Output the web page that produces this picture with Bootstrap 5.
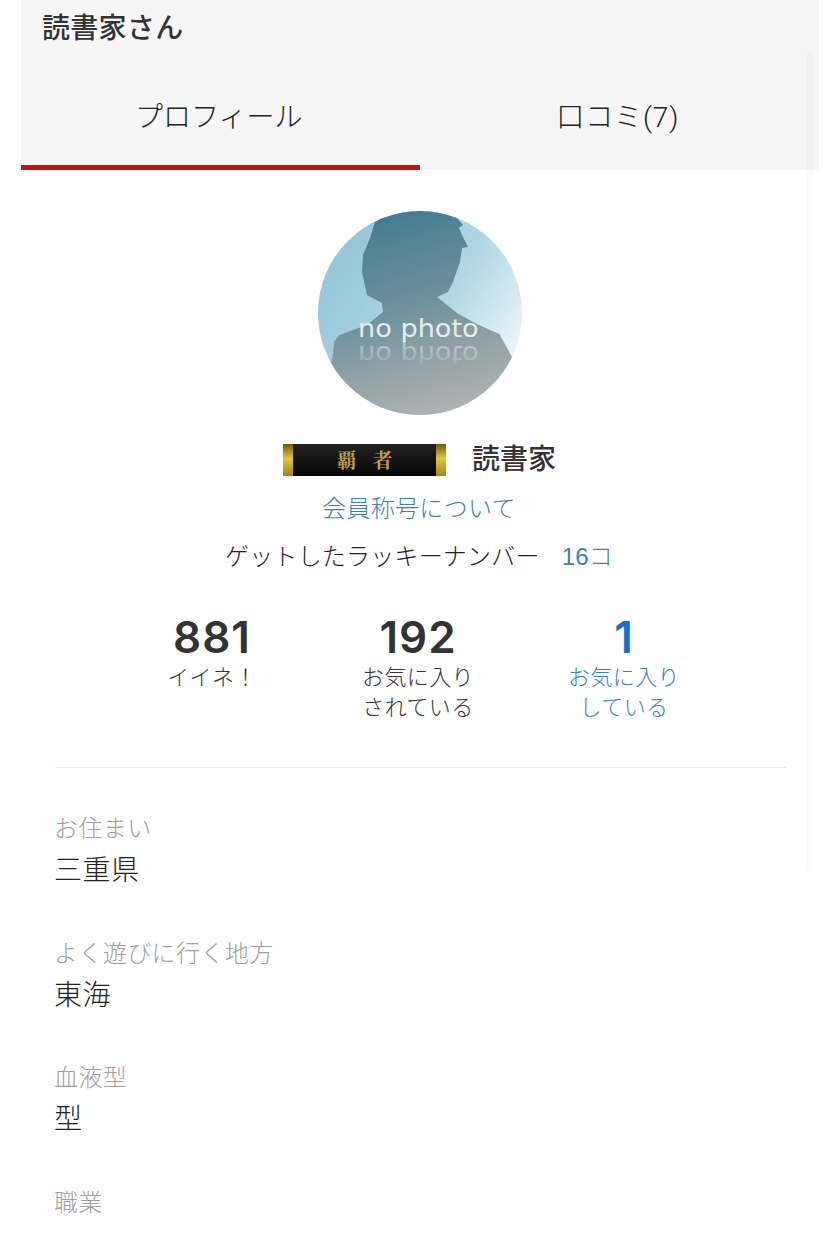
<!DOCTYPE html>
<html lang="ja">
<head>
<meta charset="utf-8">
<title>読書家さん</title>
<link href="https://cdn.jsdelivr.net/npm/bootstrap@5.3.0/dist/css/bootstrap.min.css" rel="stylesheet">
<style>
html,body{height:100%;overflow:hidden;background:#fff}
body{font-family:"Liberation Sans","Noto Sans CJK JP",sans-serif;color:#333}
.shell{width:798px;margin-left:21px;position:relative;height:1243px;overflow:hidden}
.headband{background:#f6f6f6;height:170px}
.ptitle{font-size:28px;line-height:40px;padding:6px 0 0 21px;height:62px;font-weight:500;color:#333;margin:0;letter-spacing:.3px;font-family:"Noto Sans CJK JP",sans-serif}
.tabbar{height:108px}
.tabitem{flex:0 0 398.5px;height:108px;font-family:Roboto,"Noto Sans CJK JP",sans-serif;font-size:28px;font-weight:300;line-height:112px;text-align:center;color:#222;text-decoration:none;border-bottom:5px solid transparent}
.tabitem.on{border-bottom-color:#c7120f;padding-right:3px}
.tabitem.off{padding-right:2px;letter-spacing:.9px}
.tabitem:hover{color:#222}
.avatar{width:204px;height:204px;display:block;margin:41px auto 0}
.rankrow{height:44px;margin-top:21px;padding-right:1px}
.medal{width:163px;height:32px;margin-top:3px;background:linear-gradient(#6e5a12,#e6c738 45%,#a3831a) left/10px 100% no-repeat,linear-gradient(#6e5a12,#e6c738 45%,#a3831a) right/10px 100% no-repeat,linear-gradient(#232323,#050505);color:#c09f3c;font-family:"Noto Serif CJK JP","Noto Sans CJK JP",serif;font-weight:700;font-size:20px;letter-spacing:16px;line-height:32px;text-align:center;text-indent:16px}
.rankname{font-size:28px;font-weight:500;color:#333;margin-left:26px;line-height:40px;margin-top:-3px;font-family:"Noto Sans CJK JP",sans-serif}
.bluelink{color:#3f7fc1;text-decoration:none}
.aboutline{font-size:24px;line-height:36px;text-align:center;margin-top:11px;letter-spacing:.3px;padding-right:2px;font-weight:300}
.luckyline{font-size:24px;line-height:36px;margin-top:12px;padding-right:2px;letter-spacing:.2px;font-weight:300;color:#222}
.luckyline .bluelink{margin-left:22px}
.statrow{margin-top:37px;padding-left:88px}
.statcol{width:206px;text-align:center;font-size:22px;line-height:30px;flex:none}
.statnum{font-family:Inter,"Liberation Sans",sans-serif;font-size:44px;font-weight:600;line-height:50px;color:#333;display:block;letter-spacing:1px}
.statlabel{display:block;margin-top:1px;color:#333;font-weight:300;letter-spacing:.4px}
.statcol.lnk .statnum{color:#0f6fd6}
.statcol.lnk .statlabel{color:#3f7fc1}
.divide{height:1px;background:#e8e8e8;margin:44px 33px 0 34px}
.fields{padding:41px 34px 0 33px}
.fieldset1{height:124.5px}
.flabel{font-size:24px;line-height:40px;color:#a0a0a0;height:41px;font-weight:300;letter-spacing:.4px}
.fvalue{font-size:28px;line-height:42px;color:#222;font-weight:300;letter-spacing:.6px}
.ghostbar{position:absolute;left:786px;top:52px;width:6px;height:820px;background:rgba(0,0,0,.018);border-radius:3px}
</style>
</head>
<body>
<div class="shell">
  <div class="headband">
    <h1 class="ptitle">読書家さん</h1>
    <div class="tabbar d-flex">
      <a class="tabitem on" href="#">プロフィール</a>
      <a class="tabitem off" href="#">口コミ(7)</a>
    </div>
  </div>

  <svg class="avatar" viewBox="54 33 612 612" aria-label="no photo">
    <defs>
      <clipPath id="cc"><circle cx="360" cy="339" r="306"/></clipPath>
      <linearGradient id="bg" x1="0.05" y1="0" x2="1" y2="0.6">
        <stop offset="0" stop-color="#8dc3d6"/>
        <stop offset="0.65" stop-color="#b2d7e3"/>
        <stop offset="1" stop-color="#e8f3f7"/>
      </linearGradient>
      <linearGradient id="sil" x1="0.35" y1="0" x2="0.65" y2="1">
        <stop offset="0" stop-color="#447b90"/>
        <stop offset="0.45" stop-color="#6f919c"/>
        <stop offset="0.72" stop-color="#95a3a8"/>
        <stop offset="1" stop-color="#b4b4b4"/>
      </linearGradient>
      <linearGradient id="refl" x1="0" y1="0" x2="0" y2="1">
        <stop offset="0" stop-color="#fff" stop-opacity=".05"/>
        <stop offset="1" stop-color="#fff" stop-opacity=".5"/>
      </linearGradient>
    </defs>
    <g clip-path="url(#cc)">
      <rect x="54" y="33" width="612" height="612" fill="url(#bg)"/>
      <path fill="url(#sil)" d="M225 66 L290 25 L440 25 L471 54 L489 75 L477 84 L489 111 L504 141 L486 144 L480 186 L459 246 L444 276 L411 291 L441 315 L471 339 L530 372 L598 402 L640 478 L700 660 L40 660 L98 470 L102 425 L118 405 L200 375 L249 336 L246 309 L201 285 L186 216 L189 165 L210 114 Z"/>
      <text x="174" y="412" textLength="362" lengthAdjust="spacingAndGlyphs" font-family="DejaVu Sans,sans-serif" font-size="72" fill="#e6ecf0">no photo</text>
      <text transform="translate(0 850) scale(1 -1)" x="174" y="412" textLength="362" lengthAdjust="spacingAndGlyphs" font-family="DejaVu Sans,sans-serif" font-size="72" fill="url(#refl)">no photo</text>
    </g>
  </svg>

  <div class="rankrow d-flex justify-content-center align-items-center">
    <div class="medal">覇者</div>
    <div class="rankname">読書家</div>
  </div>
  <div class="aboutline"><a class="bluelink" href="#">会員称号について</a></div>
  <div class="luckyline d-flex justify-content-center">ゲットしたラッキーナンバー<a class="bluelink" href="#">16コ</a></div>

  <div class="statrow d-flex">
    <div class="statcol"><span class="statnum">881</span><span class="statlabel">イイネ！</span></div>
    <div class="statcol"><span class="statnum">192</span><span class="statlabel">お気に入り<br>されている</span></div>
    <div class="statcol lnk"><span class="statnum">1</span><span class="statlabel">お気に入り<br>している</span></div>
  </div>
  <div class="divide"></div>

  <div class="fields">
    <div class="fieldset1"><div class="flabel">お住まい</div><div class="fvalue">三重県</div></div>
    <div class="fieldset1"><div class="flabel">よく遊びに行く地方</div><div class="fvalue">東海</div></div>
    <div class="fieldset1"><div class="flabel">血液型</div><div class="fvalue">型</div></div>
    <div class="fieldset1"><div class="flabel">職業</div></div>
  </div>
  <div class="ghostbar"></div>
</div>
<script src="https://cdn.jsdelivr.net/npm/bootstrap@5.3.0/dist/js/bootstrap.bundle.min.js"></script>
</body>
</html>
